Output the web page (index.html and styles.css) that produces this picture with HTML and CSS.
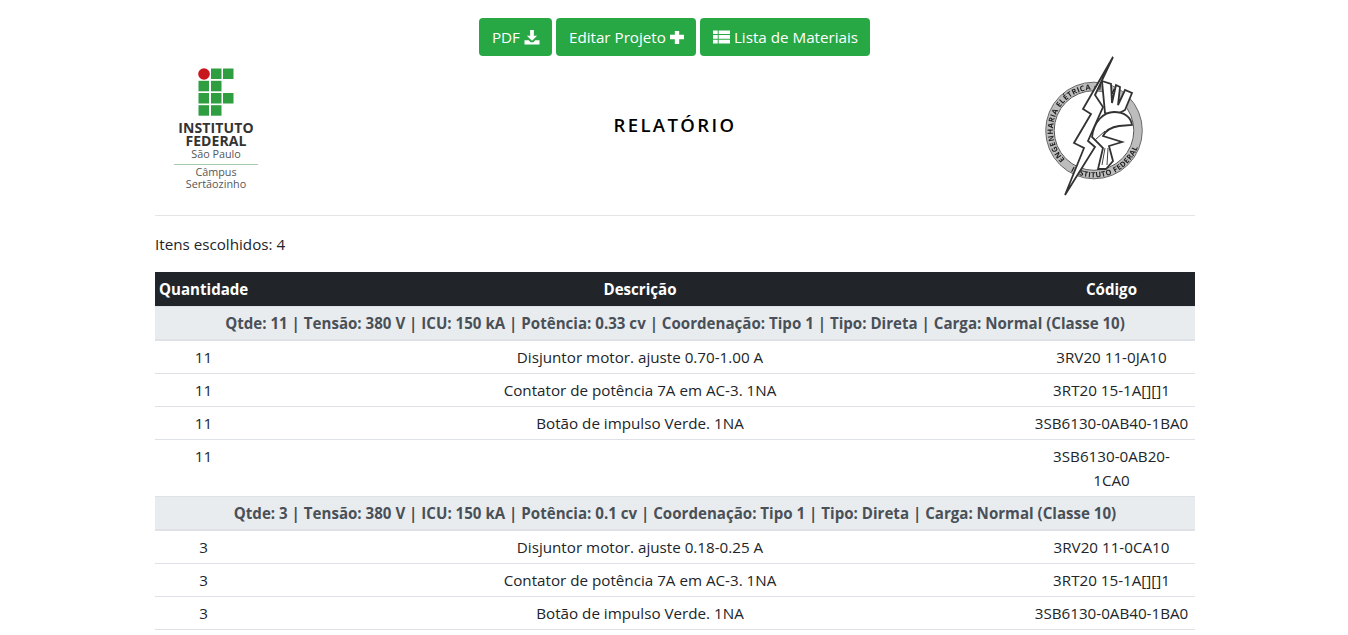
FILE: index.html
```html
<!DOCTYPE html>
<html lang="pt-BR">
<head>
    <meta charset="UTF-8">
    <title>Relatório</title>
    <link rel="stylesheet" href="styles.css">
</head>
<body>
    <div class="container">
        <div class="actions">
            <a href="#" class="btn">PDF
                <svg class="icon" viewBox="0 0 16 16"><path d="M6 0h4v6h3.500L8 11.500 2.500 6H6zM0 11h4.500l2 2h3l2-2H16v4.500H0z"/></svg>
            </a>
            <a href="#" class="btn">Editar Projeto
                <svg class="icon icon-plus" viewBox="0 0 16 16"><path d="M5.500 1h5v4.500H16v5h-5.500V16h-5v-5.500H0v-5h5.500z"/></svg>
            </a>
            <a href="#" class="btn">
                <svg class="icon icon-list" viewBox="0 0 18 14"><path d="M0 0h5v3.800H0zM6 0h12v3.800H6zM0 5h5v3.800H0zM6 5h12v3.800H6zM0 10h5v3.800H0zM6 10h12v3.800H6z"/></svg>
                Lista de Materiais
            </a>
        </div>

        <header class="report-header">
            <div class="logo-if">
                <svg class="if-mark" viewBox="0 0 36 48">
                    <circle cx="6" cy="6" r="5.800" fill="#c8161d"/>
                    <rect x="13" y="0.500" width="10.500" height="10.500" fill="#2f9e41"/>
                    <rect x="25" y="0.500" width="10.500" height="10.500" fill="#2f9e41"/>
                    <rect x="0.500" y="12.800" width="10.500" height="10.500" fill="#2f9e41"/>
                    <rect x="13" y="12.800" width="10.500" height="10.500" fill="#2f9e41"/>
                    <rect x="0.500" y="25" width="10.500" height="10.500" fill="#2f9e41"/>
                    <rect x="13" y="25" width="10.500" height="10.500" fill="#2f9e41"/>
                    <rect x="25" y="25" width="10.500" height="10.500" fill="#2f9e41"/>
                    <rect x="0.500" y="37.200" width="10.500" height="10.500" fill="#2f9e41"/>
                    <rect x="13" y="37.200" width="10.500" height="10.500" fill="#2f9e41"/>
                </svg>
                <div class="if-name">INSTITUTO<br>FEDERAL</div>
                <div class="if-campus">São Paulo</div>
                <div class="if-line"></div>
                <div class="if-campus">Câmpus<br>Sertãozinho</div>
            </div>
            <h1 class="title">RELATÓRIO</h1>
            <svg class="logo-ee" viewBox="0 0 100 142" fill="none">
                <defs>
                    <path id="ring-top" d="M20 104.500 A41 41 0 1 1 90 75.500"/>
                    <path id="ring-bottom" d="M25.500 116.200 A47 47 0 0 0 96 75.500"/>
                    <filter id="soft"><feGaussianBlur stdDeviation="0.450"/></filter>
                </defs>
                <g filter="url(#soft)">
                    <circle cx="49" cy="75.500" r="44" stroke="#bdbdbd" stroke-width="8"/>
                    <circle cx="49" cy="75.500" r="48.300" stroke="#666" stroke-width="1"/>
                    <circle cx="49" cy="75.500" r="39.800" stroke="#555" stroke-width="1"/>
                    <text class="ring-label"><textPath href="#ring-top">ENGENHARIA ELÉTRICA · I.E.E.</textPath></text>
                    <text class="ring-label"><textPath href="#ring-bottom">INSTITUTO FEDERAL</textPath></text>
                    <path d="M68 2 L38 54 L46 59 L29 88 L39 93 L20 140 L50 92 L43 86 L58 52 L50 40 Z" fill="#fff" stroke="#333" stroke-width="1.800"/>
                    <path d="M57 26 L66 29 L67 48 L71 30 L75 32 L73 50 L80 35 L87 38 L80 55 C72 60 66 60 60 58 Z" fill="#fff" stroke="#333" stroke-width="1.800"/>
                    <path d="M47 82 C49 66 59 57 69 57 C79 57 86 62 87 70 L74 71 C67 72 61 75 58 81 L77 87 L64 91 L68 106 L61 114 L53 114 L58 93 Z" fill="#fff" stroke="#333" stroke-width="1.800"/>
                    <path d="M60 93 L57 110 M63 93 L62 110 M50 85 L60 76" stroke="#444"/>
                </g>
            </svg>
        </header>

        <hr class="divider">

        <p class="count">Itens escolhidos: 4</p>

        <table class="report-table">
            <thead>
                <tr>
                    <th class="col-qty">Quantidade</th>
                    <th>Descrição</th>
                    <th class="col-code">Código</th>
                </tr>
            </thead>
            <tbody>
                <tr class="group"><td colspan="3">Qtde: 11 | Tensão: 380 V | ICU: 150 kA | Potência: 0.33 cv | Coordenação: Tipo 1 | Tipo: Direta | Carga: Normal (Classe 10)</td></tr>
                <tr><td>11</td><td>Disjuntor motor. ajuste 0.70-1.00 A</td><td>3RV20 11-0JA10</td></tr>
                <tr><td>11</td><td>Contator de potência 7A em AC-3. 1NA</td><td>3RT20 15-1A[][]1</td></tr>
                <tr><td>11</td><td>Botão de impulso Verde. 1NA</td><td>3SB6130-0AB40-1BA0</td></tr>
                <tr><td>11</td><td></td><td>3SB6130-0AB20-<br>1CA0</td></tr>
                <tr class="group"><td colspan="3">Qtde: 3 | Tensão: 380 V | ICU: 150 kA | Potência: 0.1 cv | Coordenação: Tipo 1 | Tipo: Direta | Carga: Normal (Classe 10)</td></tr>
                <tr><td>3</td><td>Disjuntor motor. ajuste 0.18-0.25 A</td><td>3RV20 11-0CA10</td></tr>
                <tr><td>3</td><td>Contator de potência 7A em AC-3. 1NA</td><td>3RT20 15-1A[][]1</td></tr>
                <tr><td>3</td><td>Botão de impulso Verde. 1NA</td><td>3SB6130-0AB40-1BA0</td></tr>
            </tbody>
        </table>
    </div>
</body>
</html>
```
FILE: styles.css
```css
* {
    margin: 0;
    padding: 0;
    box-sizing: border-box;
}

body {
    font-family: "Open Sans", Arial, sans-serif;
    font-size: 15.2px;
    line-height: 24px;
    color: #212529;
    background-color: #fff;
}

.container {
    width: 1040px;
    margin-left: 155px;
}

.actions {
    display: flex;
    justify-content: center;
    gap: 4px;
    padding-top: 18px;
    margin-left: -1px;
}

.btn {
    display: flex;
    align-items: center;
    gap: 4px;
    height: 38px;
    padding: 0 12px 0 13px;
    background-color: #28a745;
    border-radius: 4px;
    color: #fff;
    text-decoration: none;
}

.icon {
    width: 16px;
    height: 15px;
    fill: #fff;
}

.icon-plus {
    width: 14px;
    height: 14px;
}

.icon-list {
    width: 17px;
    height: 14px;
}

.report-header {
    display: grid;
    grid-template-columns: 1fr auto 1fr;
    align-items: start;
    height: 143px;
}

.logo-if {
    width: 84px;
    margin: 12px 0 0 19px;
    display: flex;
    flex-direction: column;
    align-items: center;
    color: #555;
    text-align: center;
}

.if-mark {
    width: 36px;
    height: 48px;
    margin-bottom: 5px;
}

.if-name {
    font-size: 14px;
    font-weight: 700;
    line-height: 13px;
    letter-spacing: 0.1px;
    margin-bottom: 1px;
    color: #333;
}

.if-campus {
    font-size: 10.800px;
    line-height: 12px;
}

.if-line {
    width: 84px;
    height: 1px;
    margin: 4px 0 1px;
    background-color: #a9c9ae;
}

.title {
    font-size: 18.500px;
    font-weight: 600;
    letter-spacing: 2.400px;
    line-height: 24px;
    color: #000;
    margin-top: 57px;
}

.logo-ee {
    width: 100px;
    height: 142px;
    margin: -1px 50px 0 0;
    justify-self: end;
}

.ring-label {
    font-size: 7.500px;
    font-weight: 700;
    letter-spacing: 0.400px;
    fill: #222;
}

.divider {
    border: none;
    border-top: 1px solid #e3e5e7;
    margin-top: 16px;
}

.count {
    margin-top: 16px;
}

.report-table {
    width: 100%;
    margin-top: 16px;
    border-collapse: collapse;
    table-layout: fixed;
}

.report-table th {
    height: 34px;
    padding: 4px;
    background-color: #212529;
    color: #fff;
    font-size: 15.100px;
    font-weight: 700;
    text-align: center;
}

.report-table .col-qty {
    width: 97px;
}

.report-table .col-code {
    width: 167px;
}

.report-table td {
    padding: 4px;
    border-top: 1px solid #dee2e6;
    text-align: center;
    vertical-align: top;
}

.report-table tbody tr:last-child td {
    border-bottom: 1px solid #dee2e6;
}

.report-table .group td {
    background-color: #e9ecef;
    border-top: 1px solid #dee2e6;
    border-bottom: 2px solid #dee2e6;
    font-size: 15.100px;
    font-weight: 700;
    color: #495057;
}
```
